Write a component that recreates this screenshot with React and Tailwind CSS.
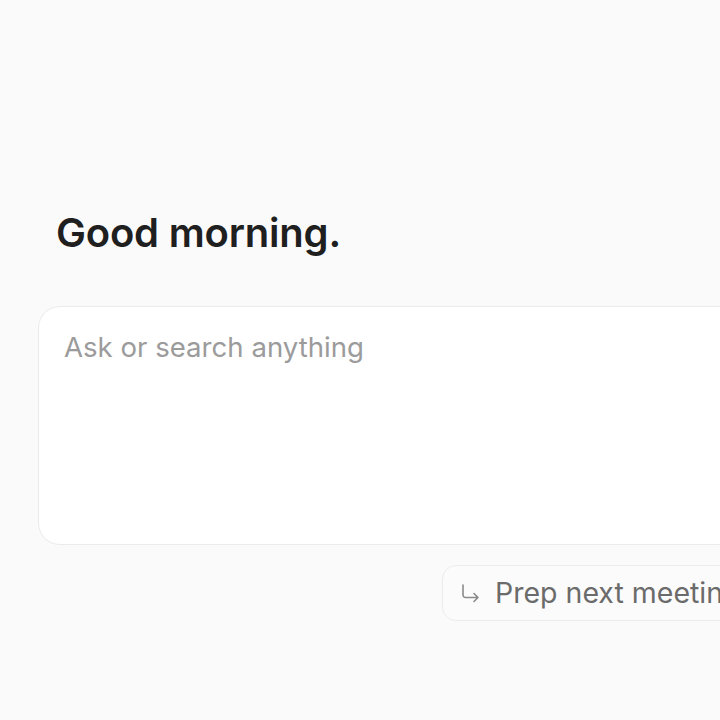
export default function App() {
    return (
        <div
            className="w-[720px] h-[720px] overflow-hidden bg-[#fafafa]"
            style={{ fontFamily: 'Inter, "Noto Sans", sans-serif' }}
        >
            <div className="pt-[207px] pl-[38px]">
                {/* Greeting */}
                <h1 className="pl-[18px] text-[40px] leading-[52px] font-semibold tracking-[-0.2px] text-[#1f1f1f]">
                    Good morning.
                </h1>

                {/* Prompt box */}
                <div className="mt-[47px] w-[760px] h-[239px] rounded-[22px] border border-[#ebebeb] bg-white pl-[25px] pt-[22px]">
                    <p className="text-[27.6px] leading-[36px] text-[#9b9b9b]">
                        Ask or search anything
                    </p>
                </div>

                {/* Suggestion chip */}
                <div className="mt-[20px] ml-[404px] flex h-[56px] w-[360px] items-center gap-[14px] rounded-[14px] border border-[#ececec] bg-[#fbfbfb] pl-[16px]">
                    <svg width="22" height="22" viewBox="0 0 22 22" fill="none" className="shrink-0">
                        <path
                            d="M4 3v10a2.5 2.5 0 0 0 2.5 2.5H19M15 11.5l4 4-4 4"
                            stroke="#8a8a8a"
                            strokeWidth="1.6"
                            strokeLinecap="round"
                            strokeLinejoin="round"
                        />
                    </svg>
                    <span className="whitespace-nowrap text-[28.5px] leading-none text-[#6b6b6b]">
                        Prep next meeting
                    </span>
                </div>
            </div>
        </div>
    );
}
